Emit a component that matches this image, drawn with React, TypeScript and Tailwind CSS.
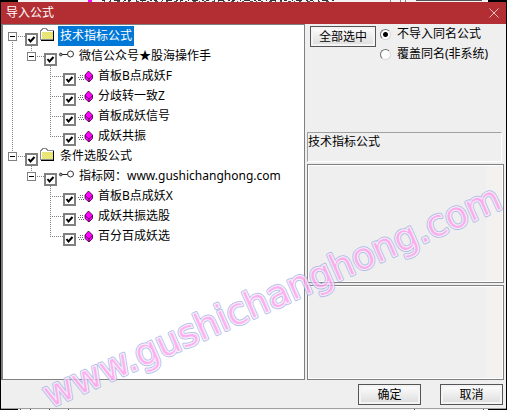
import { useState } from 'react'

type NodeKind = 'folder' | 'group' | 'formula'

type TreeNode = {
  id: string
  kind: NodeKind
  label: string
  children?: TreeNode[]
}

const TREE: TreeNode[] = [
  {
    id: 'indicator',
    kind: 'folder',
    label: '技术指标公式',
    children: [
      {
        id: 'indicator-group',
        kind: 'group',
        label: '微信公众号★股海操作手',
        children: [
          { id: 'i1', kind: 'formula', label: '首板B点成妖F' },
          { id: 'i2', kind: 'formula', label: '分歧转一致Z' },
          { id: 'i3', kind: 'formula', label: '首板成妖信号' },
          { id: 'i4', kind: 'formula', label: '成妖共振' },
        ],
      },
    ],
  },
  {
    id: 'picker',
    kind: 'folder',
    label: '条件选股公式',
    children: [
      {
        id: 'picker-group',
        kind: 'group',
        label: '指标网：www.gushichanghong.com',
        children: [
          { id: 'p1', kind: 'formula', label: '首板B点成妖X' },
          { id: 'p2', kind: 'formula', label: '成妖共振选股' },
          { id: 'p3', kind: 'formula', label: '百分百成妖选' },
        ],
      },
    ],
  },
]

function FolderIcon() {
  return (
    <svg width="16" height="16" viewBox="0 0 16 16" shapeRendering="crispEdges" className="shrink-0">
      <path d="M1 2h1V1h1V0h5v1h1v1h6v10H1z" fill="#8c8c8c" />
      <path d="M2 3h1V2h1V1h3v1h1v1h6v8H2z" fill="#fff" />
      <path d="M3 4h11v7H3z" fill="#f2ee5c" />
      <path
        d="M3 4.5h11M4 5.5h10M3 6.5h11M4 7.5h10M3 8.5h11M4 9.5h10M3 10.5h11"
        stroke="#dedc90"
        strokeDasharray="1 1"
      />
      <path d="M14 3h1v10H2v-1h12z" fill="#000" />
    </svg>
  )
}

function GroupIcon() {
  return (
    <svg width="16" height="16" viewBox="0 0 16 16" className="shrink-0">
      <path d="M4 6.5h6" stroke="#222" />
      <circle cx="2.8" cy="6.5" r="1.4" fill="#999" stroke="#222" strokeWidth="0.8" />
      <circle cx="12.5" cy="6" r="3" fill="#fff" stroke="#333" />
    </svg>
  )
}

function FormulaIcon() {
  return (
    <svg width="16" height="16" viewBox="0 0 16 16" className="shrink-0">
      <path d="M3 7.5h4M1 9.5h5M2 11.5h5" stroke="#666" strokeDasharray="1 1" shapeRendering="crispEdges" />
      <path d="M11.5 3 15.5 7v3.5L12 14 8 10.5V7z" fill="#f0f" stroke="#300030" strokeWidth="0.8" />
      <path d="M8 7.5l4 3.5 3.5-3.5M12 11v3" fill="none" stroke="#500050" strokeWidth="0.8" />
    </svg>
  )
}

function NodeIcon(props: { kind: NodeKind }) {
  if (props.kind === 'folder') return <FolderIcon />
  if (props.kind === 'group') return <GroupIcon />
  return <FormulaIcon />
}

function Connector(props: { up?: boolean; down?: boolean; branch?: boolean }) {
  return (
    <svg
      width="19"
      height="20"
      viewBox="0 0 19 20"
      shapeRendering="crispEdges"
      stroke="#808080"
      strokeDasharray="1 1"
      className="shrink-0 overflow-visible"
    >
      {props.up ? <path d="M9.5 0v10" /> : null}
      {props.down ? <path d="M9.5 10v10" /> : null}
      {props.branch ? <path d="M9 10.5h13" /> : null}
    </svg>
  )
}

function TreeItem(props: {
  node: TreeNode
  trail: boolean[]
  first: boolean
  last: boolean
  selected: string
  onSelect: (node: TreeNode) => void
}) {
  const { node, trail, first, last, selected, onSelect } = props
  const [open, setOpen] = useState(true)
  const isSelected = selected === node.id

  return (
    <li>
      <div className="flex h-5 items-center">
        {trail.map((line, index) => (
          <Connector key={index} up={line} down={line} />
        ))}
        <div className="relative flex shrink-0">
          <Connector up={!first || trail.length > 0} down={!last} branch />
          {node.children ? (
            <button
              type="button"
              aria-label={open ? '折叠' : '展开'}
              onClick={() => setOpen(!open)}
              className="absolute top-1.5 left-[5px] flex h-[9px] w-[9px] items-center justify-center border border-[#808080] bg-white"
            >
              <span className="h-px w-[5px] bg-black" />
              {open ? null : <span className="absolute h-[5px] w-px bg-black" />}
            </button>
          ) : null}
        </div>
        <span className="relative flex h-5 w-[17px] shrink-0 items-end pl-[3px]">
          <input
            id={node.id}
            type="checkbox"
            defaultChecked
            className="peer h-[13px] w-[13px] appearance-none border-2 border-[#808080] bg-white"
          />
          <svg
            width="13"
            height="13"
            viewBox="0 0 13 13"
            className="pointer-events-none absolute bottom-0 left-[3px] hidden peer-checked:block"
          >
            <path d="M3.5 6 5.5 8.5 9.5 4" fill="none" stroke="#000" strokeWidth="2" />
          </svg>
        </span>
        <NodeIcon kind={node.kind} />
        <label
          htmlFor={node.id}
          onClick={() => onSelect(node)}
          className={
            isSelected
              ? 'ml-[3px] bg-[#0078d7] px-0.5 leading-5 whitespace-nowrap text-white'
              : 'ml-[3px] px-0.5 leading-5 whitespace-nowrap'
          }
        >
          {node.label}
        </label>
      </div>
      {node.children && open ? (
        <ul>
          {node.children.map((child, index) => (
            <TreeItem
              key={child.id}
              node={child}
              trail={[...trail, !last]}
              first={index === 0}
              last={index === node.children!.length - 1}
              selected={selected}
              onSelect={onSelect}
            />
          ))}
        </ul>
      ) : null}
    </li>
  )
}

function DialogButton(props: { children: string; className: string }) {
  return (
    <button
      type="button"
      className={`${props.className} h-[21px] border border-[#555] bg-linear-to-b from-white to-[#dcdcdc] leading-4 shadow-[inset_0_0_0_2px_#f4f4f4]`}
    >
      {props.children}
    </button>
  )
}

function RadioOption(props: { value: string; label: string; checked?: boolean }) {
  return (
    <label className="flex h-5 items-center gap-1.5 whitespace-nowrap">
      <input
        type="radio"
        name="conflict"
        value={props.value}
        defaultChecked={props.checked}
        className="h-[11px] w-[11px] shrink-0 appearance-none rounded-full border border-t-[#707070] border-r-[#d8d8d8] border-b-[#d8d8d8] border-l-[#707070] bg-white checked:bg-[radial-gradient(circle,#000_2px,#fff_3px)]"
      />
      {props.label}
    </label>
  )
}

function PreviewBox(props: { label: string; className: string }) {
  return (
    <textarea
      readOnly
      aria-label={props.label}
      className={`${props.className} block w-full resize-none border border-[#808080] bg-[linear-gradient(to_left,#f4f2f0_17px,#efefef_17px)] shadow-[inset_0_0_0_1px_#fff] outline-none`}
    />
  )
}

// Slivers of the window behind the dialog
function BackdropEdge(props: { position: 'top' | 'bottom' }) {
  return (
    <div className="flex shrink-0 bg-black">
      <svg width="100%" height={props.position === 'top' ? 2 : 1} shapeRendering="crispEdges">
        <rect x="18" width="470" height="2" fill="#f4f4f4" />
        {props.position === 'top' ? (
          <g>
            <rect x="88" width="4" height="2" fill="#f0f" />
            <path d="M102 .5h232" stroke="#333" strokeDasharray="3 5 1 3 6 4 2 2" />
            <path d="M104 1.5h226" stroke="#555" strokeDasharray="1 4 2 6 3 3" />
            <rect x="416" width="66" height="1" fill="#555" />
            <path d="M390.5 0v2M400.5 0v2M405.5 0v2" stroke="#888" />
          </g>
        ) : (
          <path d="M20.5 0v1M30.5 0v1M49.5 0v1M68.5 0v1M414.5 0v1M483.5 0v1" stroke="#555" />
        )}
      </svg>
    </div>
  )
}

function Watermark() {
  return (
    <svg
      viewBox="0 0 507 410"
      aria-hidden="true"
      className="pointer-events-none absolute inset-0 h-full w-full opacity-80"
    >
      <defs>
        <text
          id="mark"
          transform="translate(50 408) rotate(-23.8)"
          fontFamily="DejaVu Sans, sans-serif"
          fontSize="37"
          strokeLinejoin="round"
        >
          www.gushichanghong.com
        </text>
      </defs>
      <use href="#mark" fill="#a8b0e4" stroke="#a8b0e4" strokeWidth="3.4" />
      <use href="#mark" fill="#f4f2fc" stroke="#f4f2fc" strokeWidth="1.4" />
      <use href="#mark" fill="#ff9cec" stroke="#f4f2fc" strokeWidth="0.6" />
    </svg>
  )
}

export default function App() {
  const [current, setCurrent] = useState(TREE[0])

  return (
    <div className="relative flex min-h-screen flex-col overflow-hidden bg-black font-['Noto_Sans','Noto_Sans_CJK_SC',sans-serif] text-xs text-black">
      <BackdropEdge position="top" />
      <main className="mx-px flex flex-1 flex-col border-b border-[#a0a0a0] bg-[#efefef]">
        <header className="flex h-[22px] items-center justify-between bg-[#b32e33] pr-1 pl-[5px] text-white">
          <h1>导入公式</h1>
          <button type="button" aria-label="关闭" className="flex h-4 w-4 items-center justify-center">
            <svg width="10" height="10" viewBox="0 0 10 10" stroke="#f0d0d0" strokeWidth="0.9">
              <path d="M.5.5l9 9M9.5.5l-9 9" />
            </svg>
          </button>
        </header>

        <div className="flex flex-1">
          <section className="min-w-0 flex-1 border border-l-2 border-[#808080] bg-white pt-px">
            <ul>
              {TREE.map((node, index) => (
                <TreeItem
                  key={node.id}
                  node={node}
                  trail={[]}
                  first={index === 0}
                  last={index === TREE.length - 1}
                  selected={current.id}
                  onSelect={setCurrent}
                />
              ))}
            </ul>
          </section>

          <section className="flex w-[201px] shrink-0 flex-col gap-0.5 px-0.5">
            <div className="flex h-[106px] gap-1 pt-0.5 pl-[3px]">
              <DialogButton className="w-[66px]">全部选中</DialogButton>
              <fieldset className="-mt-0.5">
                <RadioOption value="skip" label="不导入同名公式" checked />
                <RadioOption value="overwrite" label="覆盖同名(非系统)" />
              </fieldset>
            </div>
            <p className="mr-0.5 h-[30px] border border-t-[#a0a0a0] border-r-white border-b-white border-l-[#a0a0a0] leading-[18px]">
              {current.label}
            </p>
            <PreviewBox label="公式说明" className="h-[119px]" />
            <PreviewBox label="公式内容" className="flex-1" />
          </section>
        </div>

        <footer className="flex h-7 items-start justify-end gap-[19px] pt-1 pr-[3px]">
          <DialogButton className="w-[63px]">确定</DialogButton>
          <DialogButton className="w-[63px]">取消</DialogButton>
        </footer>
      </main>
      <BackdropEdge position="bottom" />
      <Watermark />
    </div>
  )
}
